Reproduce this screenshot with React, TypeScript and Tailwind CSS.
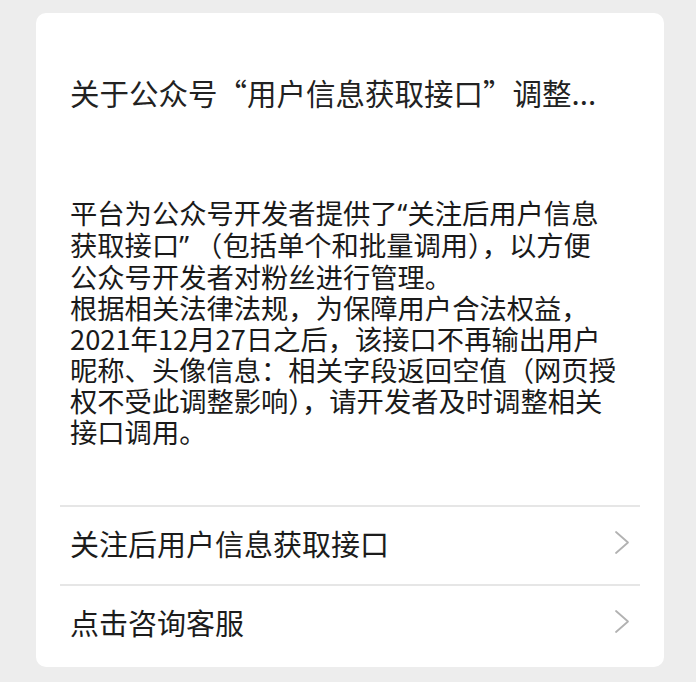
import React from "react";

// quotes in the body are narrow (western width) in the screenshot
function Q({ c }: { c: string }) {
  return <span style={{ fontFamily: '"Noto Sans", sans-serif' }}>{c}</span>;
}

const bodyLines: React.ReactNode[] = [
  <>平台为公众号开发者提供了<Q c="“" />关注后用户信息</>,
  <>获取接口<Q c="”" /> （包括单个和批量调用），以方便</>,
  "公众号开发者对粉丝进行管理。",
  "根据相关法律法规，为保障用户合法权益，",
  "2021年12月27日之后，该接口不再输出用户",
  "昵称、头像信息：相关字段返回空值（网页授",
  "权不受此调整影响），请开发者及时调整相关",
  "接口调用。",
];

function Chevron() {
  return (
    <svg width="16" height="25" viewBox="0 0 16 25" fill="none">
      <path d="M2 2 L14 12.5 L2 23" stroke="#b2b2b2" strokeWidth="1.8" strokeLinecap="round" strokeLinejoin="round" />
    </svg>
  );
}

function Row({ label }: { label: string }) {
  return (
    <div className="border-t-2 border-[#e6e6e6] h-[79px] flex items-center justify-between pl-[10px] pr-[10px] pb-[6px]">
      <span className="text-[29px] leading-[40px] text-[#1c1c1c]">{label}</span>
      <Chevron />
    </div>
  );
}

export default function App() {
  return (
    <div
      className="w-[696px] h-[682px] bg-[#ededed] pt-[13px] pl-[36px] pr-[32px] pb-[15px]"
      style={{ fontFamily: '"Noto Sans CJK SC", "Noto Sans", sans-serif' }}
    >
      <div className="bg-white rounded-[10px] h-full flex flex-col px-[24px]">
        {/* title */}
        <div className="pt-[59px] px-[10px] text-[29.5px] leading-[40px] text-[#222] whitespace-nowrap">
          关于公众号“用户信息获取接口”调整...
        </div>

        {/* body */}
        <div className="mt-[85px] px-[10px] text-[27.3px] leading-[31px] text-[#1a1a1a]">
          {bodyLines.map((l, i) => (
            <div key={i} className="whitespace-nowrap">{l}</div>
          ))}
        </div>

        <div className="mt-[58px]">
          <Row label="关注后用户信息获取接口" />
          <Row label="点击咨询客服" />
        </div>
      </div>
    </div>
  );
}
